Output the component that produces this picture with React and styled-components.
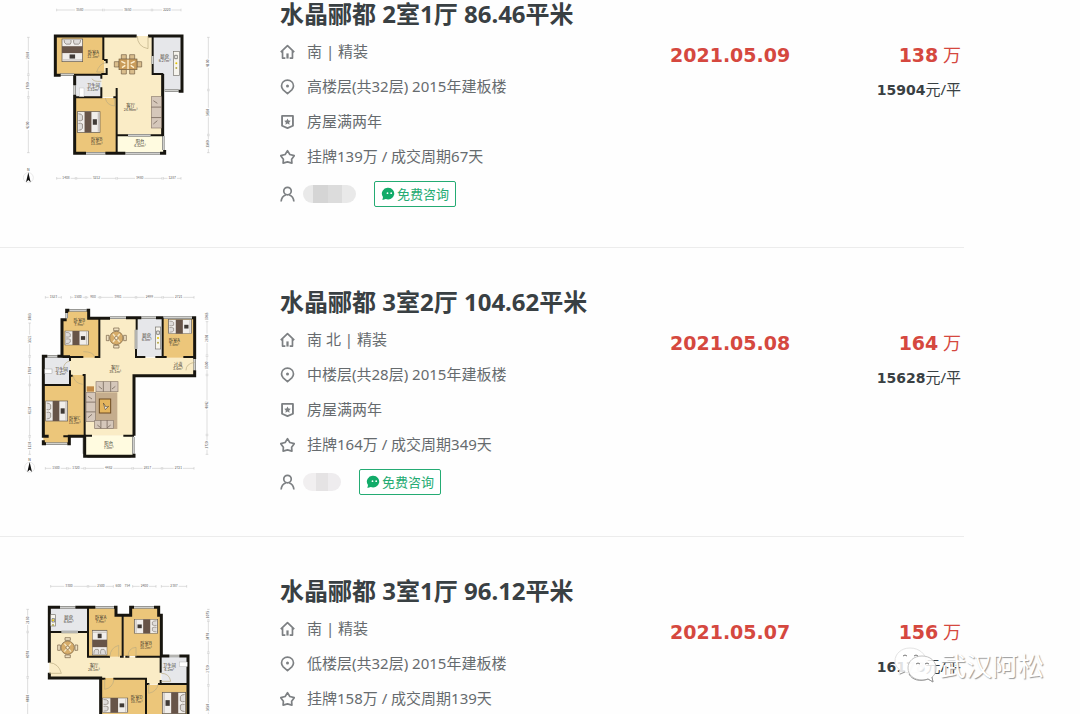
import React from "react";
import styled, { createGlobalStyle } from "styled-components";

const GlobalStyle = createGlobalStyle`
  *, *::before, *::after { box-sizing: border-box; }
  body {
    margin: 0;
    background: #fefefe;
    color: #666b6e;
    font-family: "Noto Sans", "Noto Sans CJK SC", sans-serif;
  }
  h2, p, ul { margin: 0; padding: 0; }
`;

const Page = styled.main`
  position: relative;
  height: 100vh;
  overflow: hidden;
`;

const List = styled.ul`
  list-style: none;
  max-width: 964px;
`;

const Item = styled.li`
  display: grid;
  grid-template-columns: 280px minmax(0, 1fr) 174px 120px;
  padding: 40px 0 35px;
  border-bottom: 1px solid #ececec;
  &:first-child { padding: 0 0 34px; }
`;

const PlanFrame = styled.div`
  height: 200px;
  margin-top: -3px;
  ${Item}:first-child & { margin-top: 0; }
`;

const PlanDrawing = styled.svg`
  display: block;
  width: 240px;
  height: 200px;
  font-family: "Noto Sans CJK SC", sans-serif;
`;

const Title = styled.h2`
  margin-bottom: 6px;
  color: #394043;
  font-size: 24px;
  font-weight: 700;
  line-height: 28px;
  white-space: nowrap;
`;

const Row = styled.p`
  display: flex;
  align-items: center;
  gap: 12px;
  height: 35px;
  font-size: 15px;
  line-height: 35px;
  white-space: nowrap;
`;

const AgentRow = styled(Row).attrs({ as: "div" })`
  gap: 8px;
  height: 39px;
`;

const Glyph = styled.svg`
  flex: none;
  width: 15px;
  height: 16px;
  fill: none;
  stroke: #7d8083;
  stroke-width: 1.8;
  stroke-linejoin: round;
`;

const HiddenName = styled.span`
  width: ${(p) => p.$width}px;
  height: 18px;
  margin-right: 10px;
  border-radius: 9px;
  background: ${(p) =>
    p.$dark
      ? "linear-gradient(90deg, #e9e9e9 18%, #d5d5d5 18% 48%, #dcdcdc 48% 74%, #e9e9e9 74%)"
      : "linear-gradient(90deg, #f1eff0 35%, #e5e3e4 35% 65%, #eeecee 65%)"};
`;

const ConsultButton = styled.button`
  display: flex;
  align-items: center;
  gap: 2px;
  height: 26px;
  padding: 0 6px;
  border: 1px solid #24ab73;
  border-radius: 2px;
  background: #fff;
  color: #24ab73;
  font-family: inherit;
  font-size: 13px;
  line-height: 24px;
  cursor: pointer;
`;

const BubbleSvg = styled.svg`
  width: 14px;
  height: 14px;
`;

const DealDate = styled.p`
  padding-top: 41px;
  color: #d5483f;
  font-family: "DejaVu Sans", sans-serif;
  font-size: 19px;
  font-weight: 700;
  line-height: 28px;
`;

const PriceColumn = styled.div`
  padding: 41px 3px 0 0;
  text-align: right;
  white-space: nowrap;
`;

const Total = styled.p`
  color: #d5483f;
  font-size: 18px;
  line-height: 28px;
`;

const Unit = styled.p`
  margin-top: 6px;
  color: #394043;
  font-size: 15px;
  line-height: 28px;
`;

const Figure = styled.strong`
  font-family: "DejaVu Sans", sans-serif;
  font-size: ${(p) => (p.$large ? 19 : 14)}px;
  font-weight: 700;
`;

const Watermark = styled.div`
  position: absolute;
  right: 36px;
  top: 646px;
  display: flex;
  align-items: center;
  gap: 3px;
  color: #fff;
  font-size: 26px;
  line-height: 40px;
  text-shadow: 1px 1px 1px #999;
`;

const WatermarkLogo = styled.svg`
  width: 44px;
  height: 40px;
`;

const HouseIcon = () => (
  <Glyph viewBox="0 0 16 16" aria-hidden="true">
    <path d="M.8 8.2 8 1.2l7.200 7M2.700 7v7.500h3M13.300 7v7.500h-3" />
    <path d="M8 9.500v5.500" strokeWidth="2.400" />
  </Glyph>
);
const PinIcon = () => (
  <Glyph viewBox="0 0 16 16" aria-hidden="true">
    <path d="M8 15 3.400 11A6.200 6.200 0 0 1 1.600 6.800A6.400 6.200 0 0 1 14.400 6.800 6.200 6.200 0 0 1 12.600 11Z" />
    <circle cx="8" cy="7" r="1.600" fill="#7d8083" stroke="none" />
  </Glyph>
);
const ShieldIcon = () => (
  <Glyph viewBox="0 0 16 16" aria-hidden="true">
    <path d="M2.200 1.500h11.600v10.500L8 14.500 2.200 12Z" strokeWidth="2" />
    <path d="m8 4.200 1.100 2.200 2.400.3-1.700 1.700.4 2.400L8 9.600l-2.200 1.200.4-2.400-1.700-1.700 2.400-.3Z" fill="#7d8083" stroke="none" />
  </Glyph>
);
const StarIcon = () => (
  <Glyph viewBox="0 0 16 16" aria-hidden="true">
    <path d="m8 1.200 2.500 4.100 4.700 1.300-2.800 3.900.3 4L8 13.200l-4.700 1.300.3-4L.8 6.600l4.700-1.300Z" />
  </Glyph>
);
const PersonIcon = () => (
  <Glyph viewBox="0 0 16 16" aria-hidden="true">
    <circle cx="8" cy="4.900" r="4" />
    <path d="M1.200 16c.3-4 2.400-6.200 5-7M14.800 16c-.3-4-2.400-6.200-5-7" />
  </Glyph>
);
const BubbleIcon = () => (
  <BubbleSvg viewBox="0 0 14 14" aria-hidden="true">
    <path d="M7.300.8a6.200 5.800 0 1 1-2.500 11.200L1.400 13l.6-3A5.800 5.800 0 0 1 7.300.8Z" fill="#12ab69" />
    <circle cx="6.500" cy="6.200" r=".9" fill="#fff" />
    <circle cx="10.200" cy="6.200" r=".9" fill="#fff" />
  </BubbleSvg>
);

const WOOD = "#ecc67a";
const CREAM = "#faecc6";
const PALE = "#e6e7ea";
const BALCONY = "#fffbe0";
const INK = "#17150f";

const Room = ({ d, fill }) => <path d={d} fill={fill} />;
const Walls = ({ d }) => <path d={d} fill="none" stroke={INK} strokeWidth="9" />;
const Partition = ({ d }) => <path d={d} fill="none" stroke={INK} strokeWidth="6" />;
const Window = ({ d }) => (
  <g fill="none">
    <path d={d} stroke="#8a8a86" strokeWidth="8" />
    <path d={d} stroke="#dededb" strokeWidth="3" />
  </g>
);
const Door = ({ d }) => <path d={d} fill="none" stroke="#b9aa80" strokeWidth="2" />;

const Label = ({ x, y, name, area }) => (
  <text x={x} y={y} fontSize="13" fill="#3c362b" textAnchor="middle">
    {name}
    <tspan x={x} dy="12" fontSize="11">{area}</tspan>
  </text>
);

const Bed = ({ x, y, w = 66, h = 60, turn = 0 }) => (
  <g transform={`translate(${x} ${y}) rotate(${turn}) scale(${w / 66} ${h / 60})`}>
    <rect x="-33" y="-30" width="66" height="60" fill="#f1eeeb" stroke="#5e564e" strokeWidth="2" />
    <path d="M-30-24q10 0 12 6v12q-6 4-12 2M-30 24q10 0 12-6v-12q-6-4-12-2" fill="#dedbd9" stroke="#7c736a" strokeWidth="2" />
    <rect x="-12" y="-30" width="20" height="60" fill="#675448" />
    <rect x="12" y="-8" width="12" height="16" fill="#403a36" />
    <path d="M28-28v56" stroke="#aaa29a" strokeWidth="2" />
  </g>
);

const RoundTable = ({ x, y }) => (
  <g transform={`translate(${x} ${y})`} stroke="#725e42" strokeWidth="2">
    <g fill="#efe1c2">
      <path d="M-8-30H8v8H-8ZM-8 22H8v8H-8ZM-30-8h8V8h-8ZM22-8h8V8h-8Z" />
    </g>
    <circle r="20" fill="#d7ad6a" />
    <path d="M-10-12 10 12M-10 12 10-12" stroke="#f6e7c3" strokeWidth="4" />
    <circle r="5" fill="#fff0cf" />
  </g>
);

const LongTable = ({ x, y }) => (
  <g transform={`translate(${x} ${y})`} stroke="#725e42" strokeWidth="2">
    <g fill="#d9bd8c">
      <path d="M-20-29h15v14h-15ZM5-29h15v14H5ZM-20 15h15v14h-15ZM5 15h15v14H5ZM-41-8h14V8h-14ZM27-8h14V8H27Z" />
    </g>
    <rect x="-27" y="-16" width="54" height="32" fill="#c99c5b" />
    <path d="m-20-9 12 6M20-9 8-3M-18 10l10-7M18 10 8 3M0-14v28" stroke="#fff2d3" strokeWidth="4" />
  </g>
);

const Stove = ({ x, y, w = 16, h = 66 }) => (
  <g>
    <rect x={x} y={y} width={w} height={h} fill="#f6f4ed" stroke="#77746c" strokeWidth="2" />
    <path d={`M${x + 4} ${y + 12}h8v10h-8Z`} fill="none" stroke="#555" strokeWidth="2" />
    <circle cx={x + w / 2} cy={y + h / 2} r="3" fill="#e3c200" />
    <circle cx={x + w / 2} cy={y + h / 2 + 14} r="3" fill="#b6aa48" />
  </g>
);

const Sofa = ({ x, y, w, h }) => (
  <g stroke="#8c7d70" strokeWidth="2">
    <rect x={x} y={y} width={w} height={h} fill="#d5c7ba" />
    {w > h ? (
      <path d={`M${x + w / 3} ${y}v${h}M${x + (2 * w) / 3} ${y}v${h}M${x + 8} ${y + 14}l10 8M${x + w - 8} ${y + 14}l-10 8`} stroke="#635448" fill="none" />
    ) : (
      <path d={`M${x} ${y + h / 3}h${w}M${x} ${y + (2 * h) / 3}h${w}M${x + 6} ${y + 12}l12 8M${x + 6} ${y + h - 12}l12-10`} stroke="#635448" fill="none" />
    )}
  </g>
);

// Dimension chain: ticks at every stop, a length written between each two.
const Dimensions = ({ at, stops, values, vertical }) => (
  <g fontSize="10" fill="#666" textAnchor="middle">
    {values.map((value, i) => {
      const a = stops[i];
      const b = stops[i + 1];
      const mid = (a + b) / 2;
      const line = vertical
        ? `M${at} ${a + 2}V${mid - 14}M${at} ${mid + 14}V${b - 2}M${at - 4} ${a + 2}h8M${at - 4} ${b - 2}h8`
        : `M${a + 2} ${at}H${mid - 14}M${mid + 14} ${at}H${b - 2}M${a + 2} ${at - 4}v8M${b - 2} ${at - 4}v8`;
      return (
        <g key={i}>
          {b - a > 34 && <path d={line} stroke="#bdbdbd" strokeWidth="1.500" fill="none" />}
          <text
            x={vertical ? 0 : mid}
            y={vertical ? 0 : at + 3}
            transform={vertical ? `translate(${at + 3} ${mid}) rotate(-90)` : undefined}
          >
            {value}
          </text>
        </g>
      );
    })}
  </g>
);

const Compass = ({ x, y }) => (
  <g transform={`translate(${x} ${y})`}>
    <text y="-20" fontSize="11" fill="#333" textAnchor="middle">N</text>
    <circle r="15" fill="none" stroke="#d4d4d4" strokeWidth="1.500" />
    <path d="m0-16 7 30-7-7-7 7Z" fill="#111" />
  </g>
);

const PlanA = () => (
  <PlanDrawing viewBox="0 0 720 600" role="img" aria-label="户型图 2室1厅">
    <Room d="M310 108H458V222H488V406H350V292H304V222H310Z" fill={CREAM} />
    <Room d="M166 108H312V222H166Z" fill={WOOD} />
    <Room d="M226 294H350V460H226Z" fill={WOOD} />
    <Room d="M226 224H304V294H226Z" fill={PALE} />
    <Room d="M458 108H546V272H488V222H458Z" fill={PALE} />
    <Room d="M352 406H490V460H352Z" fill={BALCONY} />
    <Window d="M180 224H222M224 256V284M258 460H316M376 460H480M490 408V450M494 272H536M384 406H452M458 168V192" />
    <Walls d="M410 108H166V226H182M444 108H546V274H536M224 226V256M224 284V460H258M316 460H376M480 460H494V450M488 222V408" />
    <Partition d="M310 108V180M304 222H320V204M222 224H304V236M304 262V292H226M350 264V460M340 292H352M458 108V168M458 192V222H490M352 406H384M452 406H490M312 180H320V190" />
    <Door d="M412 108q0 32 32 38V108M318 188q-20 2-28 28h28M316 294q4 22 28 24v-24M276 236q4 10 28 8" />
    <Bed x={217} y={151} w={68} h={62} turn={90} />
    <Bed x={266} y={366} w={68} h={62} />
    <LongTable x={384} y={193} />
    <Stove x={520} y={154} w={18} h={72} />
    <Sofa x={454} y={290} w={30} h={94} />
    <rect x="238" y="264" width="14" height="26" fill="#fff" stroke="#aaa" />
    <Label x={280} y={163} name="卧室A" area="12.3m²" />
    <Label x={280} y={262} name="卫生间" area="3.32m²" />
    <Label x={290} y={424} name="卧室B" area="13.3m²" />
    <Label x={392} y={320} name="客厅" area="24.96m²" />
    <Label x={494} y={174} name="厨房" area="6.27m²" />
    <Label x={420} y={430} name="阳台" area="4.32m²" />
    <Dimensions at={30} stops={[168, 310, 456, 545]} values={["3580", "3650", "2220"]} />
    <Dimensions at={535} stops={[168, 228, 350, 488, 545]} values={["1408", "3212", "3480", "1287"]} />
    <Dimensions vertical at={85} stops={[110, 224, 292, 460]} values={["2880", "1780", "4200"]} />
    <Dimensions vertical at={625} stops={[110, 270, 405, 460]} values={["4100", "3450", "1340"]} />
    <Compass x={85} y={533} />
  </PlanDrawing>
);

const PlanB = () => (
  <PlanDrawing viewBox="0 0 720 600" role="img" aria-label="户型图 3室2厅">
    <Room d="M298 100H410V218H584V270H402V452H254V270H210V218H298Z" fill={CREAM} />
    <Room d="M200 78H268V102H298V218H186V102H200Z" fill={WOOD} />
    <Room d="M488 100H584V218H488Z" fill={WOOD} />
    <Room d="M130 300H210V270H252V454H208V476H130Z" fill={WOOD} />
    <Room d="M130 214H210V300H130Z" fill={PALE} />
    <Room d="M410 100H488V216H410Z" fill={PALE} />
    <Room d="M254 452H402V514H254Z" fill={BALCONY} />
    <Window d="M208 76H260M142 214H172M330 98H378M424 98H468M490 98H576M138 476H202M262 514H392M252 456V506M400 456V506M408 134V192M200 82V100M584 222V256" />
    <Walls d="M208 76H200V84M260 76H266V100H330M200 104H186V214H172M142 214H130V454H146M378 98H424M468 98H490M576 98H584V222M584 256V272H402V452M130 466V476H138M202 476H208V454H254V514H402V506" />
    <Partition d="M298 100V216H284M250 216H188M210 214V228M210 256V300H130M210 272H218M248 270H254V454M410 100V134M408 192V216H436M466 216H500M550 216H584M488 100V216M184 214H210M254 452H276M370 452H402M190 454H210" />
    <Door d="M284 216q-4-16-34-16M584 232q-26 4-26 24M210 228q-20 4-20 26M220 272q2 22 28 26" />
    <Bed x={230} y={159} w={70} h={42} />
    <Bed x={540} y={125} w={70} h={42} />
    <Bed x={170} y={378} w={66} h={60} />
    <RoundTable x={349} y={159} />
    <Stove x={466} y={126} w={16} h={66} />
    <rect x="284" y="322" width="68" height="110" fill="#c5ad8d" />
    <Sofa x={288} y={290} w={66} h={30} />
    <Sofa x={258} y={322} w={28} h={88} />
    <Sofa x={284} y={406} w={56} h={24} />
    <rect x="298" y="342" width="34" height="42" fill="#e5b65e" stroke="#6e4c25" strokeWidth="3" />
    <path d="m310 354 8 12 8-2-10 10Z" fill="#fff" stroke="#5a492e" strokeWidth="2" />
    <rect x="260" y="304" width="22" height="16" fill="#c18a47" />
    <rect x="134" y="252" width="22" height="14" fill="#fff" stroke="#777" />
    <Label x={238} y={110} name="卧室B" area="7.9m²" />
    <Label x={523} y={170} name="卧室A" area="7.6m²" />
    <Label x={440} y={156} name="厨房" area="6.5m²" />
    <Label x={184} y={257} name="卫生间" area="4.2m²" />
    <Label x={346} y={253} name="客厅" area="35.1m²" />
    <Label x={534} y={243} name="过道" area="3.4m²" />
    <Label x={224} y={405} name="卧室C" area="13.2m²" />
    <Label x={326} y={479} name="阳台" area="7.0m²" />
    <Dimensions at={37} stops={[134, 186, 210, 258, 300, 408, 488, 584]} values={["1523", "", "1500", "900", "3981", "2499", "2721"]} />
    <Dimensions at={550} stops={[134, 202, 254, 398, 486, 584]} values={["1500", "1320", "4482", "2817", "2721"]} />
    <Dimensions vertical at={89} stops={[80, 112, 214, 300, 454, 510]} values={["1083", "3322", "1780", "4220", "1120"]} />
    <Dimensions vertical at={621} stops={[80, 108, 212, 270, 450, 510]} values={["1083", "2891", "1500", "4842", "1720"]} />
    <Compass x={89} y={547} />
  </PlanDrawing>
);

const PlanC = () => (
  <PlanDrawing viewBox="0 0 720 600" role="img" aria-label="户型图 3室1厅">
    <g transform="translate(0 -12)">
      <Room d="M148 186H264V260H482V342H438V324H148Z" fill={CREAM} />
      <Room d="M264 112H348V136H368V260H264Z" fill={WOOD} />
      <Room d="M370 136H392V112H474V136H482V258H370Z" fill={WOOD} />
      <Room d="M302 324H438V486H302Z" fill={WOOD} />
      <Room d="M440 344H564V486H440Z" fill={WOOD} />
      <Room d="M148 112H264V186H148Z" fill={PALE} />
      <Room d="M484 258H564V342H484Z" fill={PALE} />
      <Window d="M180 112H226M286 112H342M402 112H462M508 258H538M184 186H234" />
      <Walls d="M180 112H148V278M148 308V324H302V500M226 112H286M342 112H348V136H392V112H402M462 112H476V136H484V258H508M538 258H564V500" />
      <Partition d="M264 112V260H330M150 186H184M234 186H264M368 136V260H360M376 260H388M406 260H482V308M482 330V342H564M302 326H316M340 326H438V500M440 342H448M474 342H484" />
      <Door d="M148 278q28 2 36 32h-36M330 260q0-26 26-34v34M384 260q0-26 24-28v28M314 328v30q24-4 28-30M446 342v28q26-6 28-28M484 310q24 0 28 24h-28" />
      <Bed x={299} y={218} w={74} h={44} turn={270} />
      <Bed x={438} y={169} w={70} h={42} turn={180} />
      <Bed x={345} y={406} w={76} h={44} />
      <Bed x={522} y={399} w={70} h={64} turn={180} />
      <RoundTable x={203} y={233} />
      <Stove x={152} y={134} w={14} h={34} />
      <rect x="538" y="276" width="24" height="14" fill="#fff" stroke="#999" />
      <Label x={206} y={148} name="厨房" area="6.4m²" />
      <Label x={302} y={147} name="卧室A" area="7.9m²" />
      <Label x={438} y={225} name="卧室B" area="10.2m²" />
      <Label x={282} y={290} name="客厅" area="26.1m²" />
      <Label x={508} y={290} name="卫生间" area="4.2m²" />
      <Label x={410} y={386} name="卧室D" area="10.7m²" />
      <Dimensions at={49} stops={[150, 264, 342, 368, 396, 470, 482, 562]} values={["3300", "2500", "600", "754", "2400", "", "2387"]} />
      <Dimensions vertical at={83} stops={[116, 186, 322, 450]} values={["2160", "4070", "4400"]} />
      <Dimensions vertical at={625} stops={[116, 152, 248, 346, 480]} values={["1075", "3470", "2720", "3850"]} />
    </g>
  </PlanDrawing>
);

const ICONS = { house: HouseIcon, pin: PinIcon, shield: ShieldIcon, star: StarIcon };

const LISTINGS = [
  {
    Plan: PlanA,
    title: "水晶郦都 2室1厅 86.46平米",
    facts: [
      ["house", "南 | 精装"],
      ["pin", "高楼层(共32层) 2015年建板楼"],
      ["shield", "房屋满两年"],
      ["star", "挂牌139万 / 成交周期67天"],
    ],
    nameWidth: 53,
    darkName: true,
    date: "2021.05.09",
    total: "138",
    unit: "15904",
  },
  {
    Plan: PlanB,
    title: "水晶郦都 3室2厅 104.62平米",
    facts: [
      ["house", "南 北 | 精装"],
      ["pin", "中楼层(共28层) 2015年建板楼"],
      ["shield", "房屋满两年"],
      ["star", "挂牌164万 / 成交周期349天"],
    ],
    nameWidth: 38,
    date: "2021.05.08",
    total: "164",
    unit: "15628",
  },
  {
    Plan: PlanC,
    title: "水晶郦都 3室1厅 96.12平米",
    facts: [
      ["house", "南 | 精装"],
      ["pin", "低楼层(共32层) 2015年建板楼"],
      ["star", "挂牌158万 / 成交周期139天"],
    ],
    nameWidth: 53,
    date: "2021.05.07",
    total: "156",
    unit: "16178",
  },
];

function Listing({ Plan, title, facts, nameWidth, darkName, date, total, unit }) {
  return (
    <Item>
      <PlanFrame>
        <Plan />
      </PlanFrame>
      <div>
        <Title>{title}</Title>
        {facts.map(([icon, text]) => {
          const Icon = ICONS[icon];
          return (
            <Row key={icon}>
              <Icon />
              {text}
            </Row>
          );
        })}
        <AgentRow>
          <PersonIcon />
          <HiddenName $width={nameWidth} $dark={darkName} />
          <ConsultButton type="button">
            <BubbleIcon />
            免费咨询
          </ConsultButton>
        </AgentRow>
      </div>
      <DealDate>{date}</DealDate>
      <PriceColumn>
        <Total>
          <Figure $large>{total}</Figure> 万
        </Total>
        <Unit>
          <Figure>{unit}</Figure>元/平
        </Unit>
      </PriceColumn>
    </Item>
  );
}

export default function App() {
  return (
    <Page>
      <GlobalStyle />
      <List>
        {LISTINGS.map((listing) => (
          <Listing key={listing.title} {...listing} />
        ))}
      </List>
      <Watermark>
        <WatermarkLogo viewBox="0 0 44 40" aria-hidden="true">
          <path d="M17 2C8 2 2 8 2 15c0 4 2 7 5 9l-1 5 6-3c2 1 4 1 7 1 8 0 14-5 14-12S26 2 17 2Z" fill="#fff" fillOpacity=".85" stroke="#e4e4e4" />
          <path d="M29 10c-8 0-14 5-14 12s6 12 14 12c2 0 4 0 6-1l5 3-1-5c3-2 4-5 4-9 0-7-6-12-14-12Z" fill="#fff" fillOpacity=".85" stroke="#c4c4c4" />
          <path d="M7 28l5-2M16 28c3 6 11 8 19 5l5 3-1-5" fill="none" stroke="#999" />
          <path d="M10 10q2-2 4 0M21 10q2-2 4 0M23 18q2-2 4 0M32 18q2-2 4 0" fill="none" stroke="#777" />
        </WatermarkLogo>
        武汉阿松
      </Watermark>
    </Page>
  );
}
